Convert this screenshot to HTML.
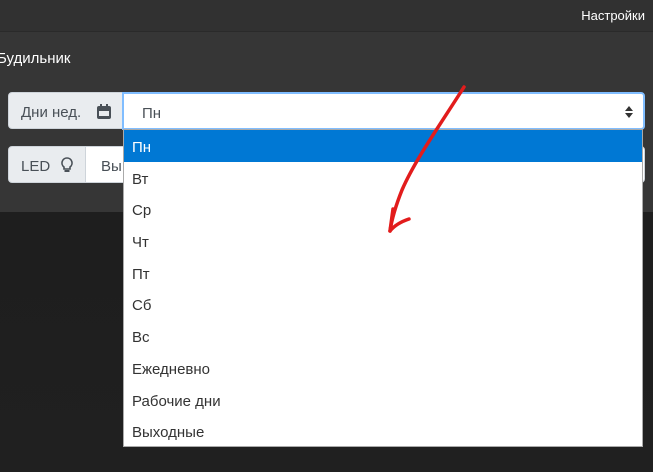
<!DOCTYPE html>
<html><head><meta charset="utf-8"><style>
body{margin:0;width:653px;height:472px;overflow:hidden;font-family:"Liberation Sans","DejaVu Sans",sans-serif;background:linear-gradient(#1c1c1c,#202020);position:relative}
.nav{position:absolute;left:0;top:0;width:653px;height:31px;background:#313131;border-bottom:1px solid #2a2a2a}
.nav span{position:absolute;right:8px;top:8px;color:#fff;font-size:13px}
.panel{position:absolute;left:0;top:32px;width:653px;height:180px;background:#363636}
.title{position:absolute;left:-3px;top:50px;color:#fff;font-size:15px}
.lbl{position:absolute;background:#e9ecef;border:1px solid #ced4da;border-radius:4px 0 0 4px;color:#495057;font-size:15px;box-sizing:border-box}
.inp{position:absolute;background:#fff;box-sizing:border-box;color:#495057;font-size:15px}
.dd{position:absolute;left:123px;top:129px;width:520px;height:318px;background:#fff;border:1px solid #aaa;box-sizing:border-box}
.dd div{height:31.7px;line-height:35px;padding-left:8px;font-size:15px;color:#333}
.dd .sel{background:#0078d4;color:#fff}
</style></head><body>
<div class="nav"><span>Настройки</span></div>
<div class="panel"></div>
<div class="title">Будильник</div>
<div class="lbl" style="left:8px;top:92px;width:115px;height:37px;padding:11px 0 0 12px">Дни нед.
<svg style="position:absolute;left:88px;top:11px" width="14" height="15" viewBox="0 0 14 15"><rect x="0" y="2" width="14" height="13" rx="2" fill="#495057"/><rect x="3" y="0" width="2" height="4" fill="#495057"/><rect x="9" y="0" width="2" height="4" fill="#495057"/><rect x="2" y="7" width="10" height="5" fill="#e9ecef"/></svg></div>
<div class="inp" style="left:122px;top:92px;width:523px;height:38px;border:2px solid #80bdff;border-radius:0 4px 4px 0;padding:11px 0 0 18px">Пн
<svg style="position:absolute;right:10px;top:12px" width="8" height="12" viewBox="0 0 8 12"><path d="M0 5L4 0L8 5ZM0 7L4 12L8 7Z" fill="#333"/></svg></div>
<div class="lbl" style="left:8px;top:146px;width:78px;height:37px;padding:11px 0 0 12px">LED
<svg style="position:absolute;left:52px;top:10px" width="12" height="16" viewBox="0 0 12 16"><path d="M6 1a5 5 0 0 0-3 9v2h6v-2a5 5 0 0 0-3-9z" fill="none" stroke="#495057" stroke-width="1.6"/><rect x="3.5" y="13" width="5" height="2" fill="#495057"/></svg></div>
<div class="inp" style="left:85px;top:146px;width:560px;height:37px;border:1px solid #ced4da;border-radius:0 4px 4px 0;padding:11px 0 0 15px">Вы</div>
<div class="dd"><div class="sel">Пн</div><div>Вт</div><div>Ср</div><div>Чт</div><div>Пт</div><div>Сб</div><div>Вс</div><div>Ежедневно</div><div>Рабочие дни</div><div>Выходные</div></div>
<svg style="position:absolute;left:0;top:0" width="653" height="472"><path d="M464 87C440 125 415 160 402 190C396 205 392 218 390 231M390 231C394 226 400 222 409 219" fill="none" stroke="#e21c1c" stroke-width="3.5" stroke-linecap="round"/><path d="M390 231L393 209" stroke="#e21c1c" stroke-width="3.5" stroke-linecap="round"/></svg>
</body></html>
